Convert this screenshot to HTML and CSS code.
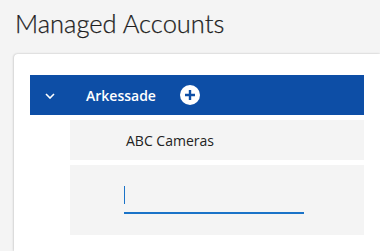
FILE: index.html
```html
<!DOCTYPE html>
<html>
<head>
<meta charset="utf-8">
<link rel="stylesheet" href="styles.css">
</head>
<body>
<h1 class="title">Managed Accounts</h1>
<div class="card">
  <div class="tree">
    <div class="parent">
      <svg class="chev" width="10" height="6" viewBox="0 0 10 6"><path d="M1 1 L5 5 L9 1" fill="none" stroke="#fff" stroke-width="1.6"/></svg>
      <span class="pname">Arkessade</span>
      <svg class="plus" width="20" height="20" viewBox="0 0 20 20"><circle cx="10" cy="10" r="10" fill="#fff"/><path d="M10 5 V15 M5 10 H15" stroke="#0d4ea6" stroke-width="2.4"/></svg>
    </div>
    <div class="child">ABC Cameras</div>
    <div class="child new">
      <div class="field"><span class="caret"></span></div>
    </div>
  </div>
</div>
</body>
</html>
```
FILE: styles.css
```css
html, body { margin: 0; padding: 0; }
body {
  background: #f4f4f4;
  width: 380px;
  height: 251px;
  overflow: hidden;
  font-family: "Open Sans", sans-serif;
}
.title {
  margin: 0;
  padding: 8px 0 0 15px;
  height: 46px;
  box-sizing: border-box;
  font-family: "Lato", sans-serif;
  font-weight: 300;
  font-size: 25.5px;
  color: #1e1e1e;
  line-height: 30px;
  -webkit-text-stroke: 0.25px #1e1e1e;
}
.card {
  margin-left: 14px;
  margin-top: 8px;
  width: 366px;
  height: 197px;
  background: #fff;
  border-radius: 4px 0 0 0;
  box-shadow: -1px 0 2px rgba(0,0,0,0.12), 0 -1px 2px rgba(0,0,0,0.06);
  padding: 21px 0 0 16px;
  box-sizing: border-box;
}
.tree { width: 334px; display: flex; flex-direction: column; gap: 5px; }
.parent {
  height: 40px;
  background: #0d4ea6;
  display: flex;
  align-items: center;
  color: #fff;
}
.chev { margin-left: 15px; margin-top: 2px; }
.pname { margin-left: 31px; font-weight: 600; font-size: 14px; }
.plus { margin-left: 24px; }
.child {
  margin-left: 40px;
  height: 40px;
  background: #f4f4f4;
  display: flex;
  align-items: center;
  padding-left: 56px;
  font-size: 14px;
  color: #222;
}
.child.new { height: 70px; padding-left: 54px; align-items: flex-start; }
.field {
  margin-top: 21px;
  width: 180px;
  height: 28px;
  border-bottom: 2px solid #1a73c8;
  box-sizing: border-box;
}
.caret { display: block; width: 1px; height: 18px; background: #1a73c8; }
```
